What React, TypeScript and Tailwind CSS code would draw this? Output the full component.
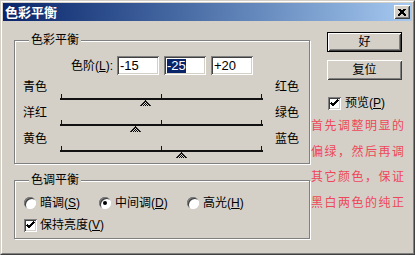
import React from "react";

const font = { fontFamily: '"Liberation Sans", "Noto Sans CJK SC", sans-serif' };

const raised =
  "shadow-[inset_1px_1px_0_#fff,inset_-1px_-1px_0_#404040,inset_2px_2px_0_#d4d0c8,inset_-2px_-2px_0_#808080]";
const sunken =
  "shadow-[inset_1px_1px_0_#808080,inset_-1px_-1px_0_#fff,inset_2px_2px_0_#404040,inset_-2px_-2px_0_#d4d0c8]";

const sliders = [
  { left: "青色", right: "红色", value: -15 },
  { left: "洋红", right: "绿色", value: -25 },
  { left: "黄色", right: "蓝色", value: 20 },
];

const Thumb = () => (
  <svg width="11" height="6" viewBox="0 0 11 6" shapeRendering="crispEdges">
    <defs>
      <pattern id="dith" width="2" height="2" patternUnits="userSpaceOnUse">
        <rect width="1" height="1" fill="#000" />
        <rect x="1" y="1" width="1" height="1" fill="#000" />
      </pattern>
    </defs>
    <polygon points="5.5,0 11,6 0,6" fill="url(#dith)" stroke="#000" strokeWidth="0.8" />
  </svg>
);

const Check = () => (
  <svg width="9" height="9" viewBox="0 0 9 9" shapeRendering="crispEdges">
    <path d="M1 4 L3 6 L8 1" fill="none" stroke="#000" strokeWidth="2" />
  </svg>
);

const CheckBox = () => (
  <span className={`w-[13px] h-[13px] bg-white flex items-center justify-center shrink-0 ${sunken}`}>
    <Check />
  </span>
);

const Radio = ({ on }: { on?: boolean }) => (
  <span className="w-[12px] h-[12px] rounded-full bg-white flex items-center justify-center shrink-0 shadow-[inset_1px_1px_0_#808080,inset_-1px_-1px_0_#fff,inset_2px_2px_0_#404040]">
    {on && <span className="w-[4px] h-[4px] rounded-full bg-black" />}
  </span>
);

const Slider = ({ value }: { value: number }) => (
  <div className="relative h-[26px]">
    <div className="absolute left-0 right-0 top-[18px] h-[2px] bg-[#111]" />
    <div className="absolute left-[1px] top-[14px] w-px h-[4px] bg-[#111]" />
    <div className="absolute left-[101px] top-[14px] w-px h-[4px] bg-[#111]" />
    <div className="absolute right-[1px] top-[14px] w-px h-[4px] bg-[#111]" />
    <div
      className="absolute top-[20px] flex"
      style={{ left: 101 + value * 1.01 - 5.5 }}
    >
      <Thumb />
    </div>
  </div>
);

export default function App() {
  return (
    <div
      className="w-[415px] h-[255px] bg-[#d4d0c8] border border-t-[#d4d0c8] border-l-[#d4d0c8] border-r-[#404040] border-b-[#404040] text-[12px] text-black"
      style={font}
    >
      <div className="h-full border border-t-white border-l-white border-r-[#808080] border-b-[#808080] p-px flex flex-col">
        <div className="h-[18px] flex items-center justify-between pl-[2px] pr-[2px] bg-gradient-to-r from-[#0a246a] to-[#a6caf0]">
          <span className="text-white font-bold text-[13px] leading-none">色彩平衡</span>
          <span className={`w-[16px] h-[14px] bg-[#d4d0c8] flex items-center justify-center ${raised}`}>
            <svg width="8" height="7" viewBox="0 0 8 7" shapeRendering="crispEdges">
              <path d="M0.5 0 L7.5 7 M7.5 0 L0.5 7 M1.5 0 L8.5 7 M6.5 0 L-0.5 7" stroke="#000" strokeWidth="1" />
            </svg>
          </span>
        </div>

        <div className="flex">
          <div className="ml-[11px] mt-[19px] w-[296px] flex flex-col">
            <div className="relative h-[124px] border border-[#808080] shadow-[inset_1px_1px_0_#fff,1px_1px_0_#fff]">
              <span className="absolute -top-[8px] left-[14px] px-[2px] bg-[#d4d0c8] leading-[14px]">色彩平衡</span>
              <div className="mt-[15px] h-[19px] flex items-center">
                <span className="w-[102px] text-right pr-[4px] leading-[14px]">
                  色阶(<u>L</u>):
                </span>
                <div className="flex gap-[5px] text-[13px]">
                  <div className={`w-[42px] h-[19px] bg-white flex items-center pl-[3px] ${sunken}`}>-15</div>
                  <div className={`w-[42px] h-[19px] bg-white flex items-center pl-[3px] ${sunken}`}>
                    <span className="bg-[#0a246a] text-white leading-[14px]">-25</span>
                  </div>
                  <div className={`w-[42px] h-[19px] bg-white flex items-center pl-[3px] ${sunken}`}>+20</div>
                </div>
              </div>
              <div className="mt-[5px] flex flex-col">
                {sliders.map((s) => (
                  <div key={s.left} className="grid grid-cols-[37px_203px_12px_auto] pl-[8px] h-[26px]">
                    <span className="leading-[14px]">{s.left}</span>
                    <Slider value={s.value} />
                    <span />
                    <span className="leading-[14px]">{s.right}</span>
                  </div>
                ))}
              </div>
            </div>

            <div className="relative mt-[16px] h-[59px] border border-[#808080] shadow-[inset_1px_1px_0_#fff,1px_1px_0_#fff]">
              <span className="absolute -top-[8px] left-[14px] px-[2px] bg-[#d4d0c8] leading-[14px]">色调平衡</span>
              <div className="mt-[15px] h-[14px] flex items-center pl-[9px]">
                <div className="w-[75px] flex items-center gap-[4px]">
                  <Radio />
                  <span className="leading-[14px]">
                    暗调(<u>S</u>)
                  </span>
                </div>
                <div className="w-[88px] flex items-center gap-[4px]">
                  <Radio on />
                  <span className="leading-[14px]">
                    中间调(<u>D</u>)
                  </span>
                </div>
                <div className="flex items-center gap-[4px]">
                  <Radio />
                  <span className="leading-[14px]">
                    高光(<u>H</u>)
                  </span>
                </div>
              </div>
              <div className="mt-[8px] h-[14px] flex items-center gap-[3px] pl-[9px]">
                <CheckBox />
                <span className="leading-[14px]">
                  保持亮度(<u>V</u>)
                </span>
              </div>
            </div>
          </div>

          <div className="ml-[1px] flex flex-col">
            <div className={`ml-[16px] mt-[11px] w-[75px] h-[20px] border border-black flex items-center justify-center ${raised}`}>
              好
            </div>
            <div className={`ml-[16px] mt-[8px] w-[75px] h-[20px] flex items-center justify-center ${raised}`}>
              复位
            </div>
            <div className="ml-[17px] mt-[16px] h-[14px] flex items-center gap-[4px]">
              <CheckBox />
              <span className="leading-[14px]">
                预览(<u>P</u>)
              </span>
            </div>
            <div className="mt-[4px] text-[#f0465a] text-[12px] tracking-[1.5px] leading-[25.5px]">
              <div>首先调整明显的</div>
              <div>偏绿，然后再调</div>
              <div>其它颜色，保证</div>
              <div>黑白两色的纯正</div>
            </div>
          </div>
        </div>
      </div>
    </div>
  );
}
